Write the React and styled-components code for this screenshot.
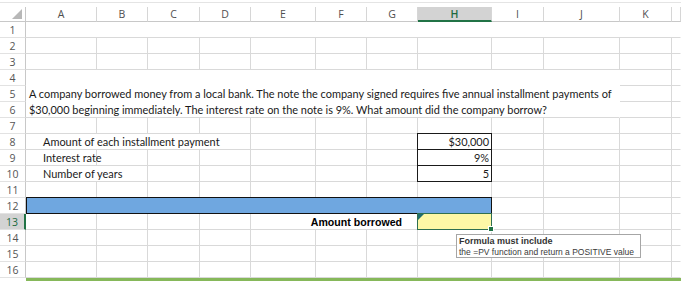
import React from 'react';
import styled, { createGlobalStyle, css } from 'styled-components';

const GlobalStyle = createGlobalStyle`
    html, body {
        margin: 0;
        padding: 0;
        background: #ffffff;
        overflow: hidden;
    }
`;

const COLS = ['A', 'B', 'C', 'D', 'E', 'F', 'G', 'H', 'I', 'J', 'K', ''];
const WIDTHS = [71, 51, 52, 51, 65, 51, 51, 74, 52, 76, 52, 9];

const Sheet = styled.div`
    position: relative;
    width: 681px;
    height: 281px;
    overflow: hidden;
    font-family: 'Lato', 'Liberation Sans', sans-serif;
`;

const TopStrip = styled.div`
    box-sizing: border-box;
    border-top: 1px solid #e4e4e4;
    margin-top: 2px;
    height: 5px;
`;

const Grid = styled.div`
    display: grid;
    grid-template-columns: 26px ${WIDTHS.map((w) => `${w}px`).join(' ')};
    grid-template-rows: 15px repeat(16, 16px);
`;

const Corner = styled.div`
    position: relative;
    box-sizing: border-box;
    border-right: 1px solid #c8c8c8;
    border-bottom: 1px solid #c8c8c8;

    &::after {
        content: '';
        position: absolute;
        right: 3px;
        bottom: 2px;
        width: 0;
        height: 0;
        border-left: 10px solid transparent;
        border-bottom: 10px solid #b8b8b8;
    }
`;

const ColHead = styled.div`
    box-sizing: border-box;
    display: flex;
    align-items: center;
    justify-content: center;
    font-family: 'Open Sans', 'Liberation Sans', sans-serif;
    font-size: 10.5px;
    color: #4f4f4f;
    border-right: 1px solid #d6d6d6;
    border-bottom: 1px solid #c8c8c8;
    ${(p) =>
        p.$active &&
        css`
            background: #d3d3d3;
            color: #1d6b3f;
            font-weight: 600;
            border-bottom: 2px solid #217346;
        `}
`;

const RowHead = styled.div`
    box-sizing: border-box;
    display: flex;
    align-items: center;
    justify-content: center;
    font-family: 'Open Sans', 'Liberation Sans', sans-serif;
    font-size: 10.5px;
    color: #555;
    border-right: 1px solid #c8c8c8;
    border-bottom: 1px solid #e2e2e2;
    ${(p) =>
        p.$active &&
        css`
            background: #d3d3d3;
            color: #1d6b3f;
            border-right: 2px solid #217346;
        `}
`;

const Cell = styled.div`
    position: relative;
    box-sizing: border-box;
    display: flex;
    align-items: center;
    min-width: 0;
    white-space: nowrap;
    font-size: 10.95px;
    color: #1a1a1a;
    grid-column: span ${(p) => p.$span || 1};
    border-right: ${(p) => (p.$noRight ? '1px solid transparent' : '1px solid #d9d9d9')};
    border-bottom: ${(p) => (p.$noBottom ? '1px solid transparent' : '1px solid #d9d9d9')};
    justify-content: ${(p) => (p.$align === 'right' ? 'flex-end' : 'flex-start')};
    padding: 0 ${(p) => p.$padRight || 2}px 0 ${(p) => p.$padLeft || 3}px;
    z-index: ${(p) => (p.$z ? 1 : 0)};
`;

const ValueCell = styled(Cell)`
    border: 1px solid #1a1a1a;
    border-top: ${(p) => (p.$first ? '1px solid #1a1a1a' : 'none')};
    margin-top: ${(p) => (p.$first ? '-1px' : '0')};
    height: ${(p) => (p.$first ? '17px' : '16px')};
    padding-right: 2px;
    justify-content: flex-end;
    margin-left: -1px;
`;

const BlueBand = styled(Cell)`
    background: #6fa7e0;
    border: 1px solid #111;
    margin-top: -1px;
    height: 17px;
`;

const BoldLabel = styled(Cell)`
    font-family: 'Liberation Sans', Arial, sans-serif;
    font-weight: 700;
    font-size: 10.6px;
    color: #000;
`;

const ActiveCell = styled(Cell)`
    background: #fdf8a6;
    border: 1px solid #2f6f50;
    margin: -1px 0 0 -1px;
    height: 17px;
    z-index: 2;

    &::before {
        content: '';
        position: absolute;
        left: 0;
        top: 0;
        width: 0;
        height: 0;
        border-right: 6px solid transparent;
        border-top: 6px solid #1f6e6e;
    }

    &::after {
        content: '';
        position: absolute;
        right: -3px;
        bottom: -3px;
        width: 4px;
        height: 4px;
        background: #217346;
        border: 1px solid #fff;
    }
`;

const BottomBar = styled.div`
    height: 3px;
    margin-left: 26px;
    background: #86b85a;
`;

const Tip = styled.div`
    position: absolute;
    left: 456px;
    top: 234px;
    width: 185px;
    height: 24px;
    box-sizing: border-box;
    padding: 1px 2px;
    background: #fff;
    border: 1px solid #a6a6a6;
    font-family: 'Liberation Sans', Arial, sans-serif;
    font-size: 8.5px;
    line-height: 10.5px;
    white-space: nowrap;
    color: #3a3a3a;
    z-index: 5;
`;

const TipTitle = styled.div`
    font-weight: 700;
    font-size: 9px;
    color: #333;
`;

const rowsData = {
    1: [{ span: 12, noRight: true }],
    4: [{ span: 10, noRight: true, noBottom: true }],
    5: [
        {
            span: 10,
            noRight: true,
            noBottom: true,
            text: 'A company borrowed money from a local bank. The note the company signed requires five annual installment payments of',
        },
    ],
    6: [
        {
            span: 10,
            noRight: true,
            text: '$30,000 beginning immediately. The interest rate on the note is 9%. What amount did the company borrow?',
        },
    ],
    8: [{ span: 4, text: 'Amount of each installment payment', padLeft: 17 }],
    9: [{ span: 1, text: 'Interest rate', padLeft: 17, z: true }],
    10: [{ span: 2, text: 'Number of years', padLeft: 17 }],
};

const values = { 8: '$30,000', 9: '9%', 10: '5' };

function renderRow(r) {
    const out = [];
    const active = r === 13;
    out.push(
        <RowHead key={`h${r}`} $active={active}>
            {r}
        </RowHead>
    );
    let col = 0;
    const custom = rowsData[r] || [];
    custom.forEach((c, i) => {
        out.push(
            <Cell
                key={`c${r}-${i}`}
                $span={c.span}
                $noRight={c.noRight}
                $noBottom={c.noBottom}
                $padLeft={c.padLeft}
                $z={c.z}
            >
                {c.text}
            </Cell>
        );
        col += c.span;
    });

    if (r === 12) {
        out.push(<BlueBand key="blue" $span={8} />);
        col = 8;
    }
    if (r === 13) {
        for (let i = 0; i < 4; i++) out.push(<Cell key={`c13-${i}`} />);
        out.push(
            <BoldLabel key="lbl" $span={3} $align="right" $padRight={15}>
                Amount borrowed
            </BoldLabel>
        );
        out.push(<ActiveCell key="act" />);
        col = 8;
    }

    for (; col < COLS.length; col++) {
        if (col === 7 && values[r]) {
            out.push(
                <ValueCell key={`v${r}`} $first={r === 8}>
                    {values[r]}
                </ValueCell>
            );
        } else {
            out.push(<Cell key={`c${r}-${col}`} $noRight={col === COLS.length - 1} />);
        }
    }
    return out;
}

export default function App() {
    const rows = Array.from({ length: 16 }, (_, i) => i + 1);
    return (
        <Sheet>
            <GlobalStyle />
            <TopStrip />
            <Grid>
                <Corner />
                {COLS.map((c, i) => (
                    <ColHead key={i} $active={c === 'H'}>
                        {c}
                    </ColHead>
                ))}
                {rows.map((r) => renderRow(r))}
            </Grid>
            <BottomBar />
            <Tip>
                <TipTitle>Formula must include</TipTitle>
                <div>the =PV function and return a POSITIVE value</div>
            </Tip>
        </Sheet>
    );
}
